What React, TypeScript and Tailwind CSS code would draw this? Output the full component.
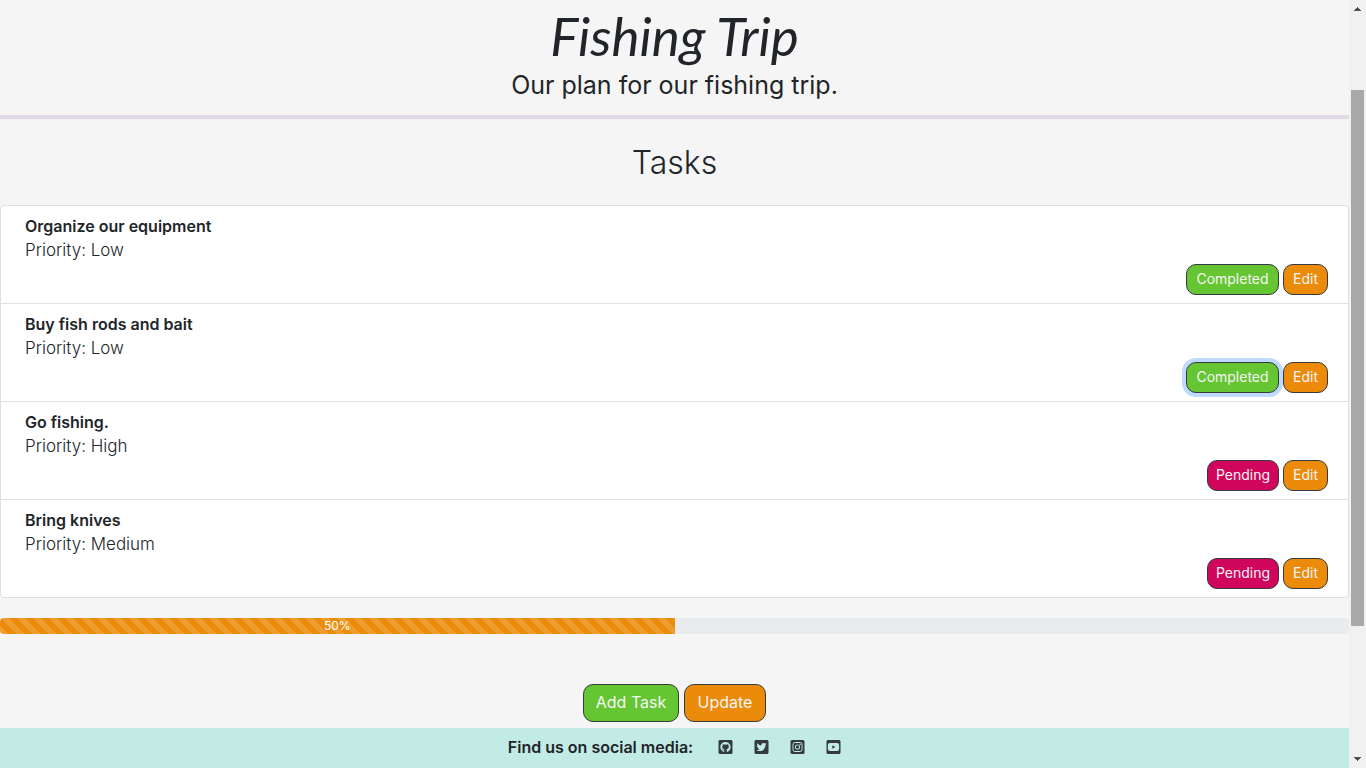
import {
  FaGithubSquare,
  FaInstagramSquare,
  FaTwitterSquare,
  FaYoutubeSquare,
} from "react-icons/fa";

type Task = {
  title: string;
  priority: "Low" | "Medium" | "High";
  done: boolean;
  highlighted?: boolean;
};

const tasks: Task[] = [
  { title: "Organize our equipment", priority: "Low", done: true },
  { title: "Buy fish rods and bait", priority: "Low", done: true, highlighted: true },
  { title: "Go fishing.", priority: "High", done: false },
  { title: "Bring knives", priority: "Medium", done: false },
];

const socials = [
  { label: "GitHub", Icon: FaGithubSquare },
  { label: "Twitter", Icon: FaTwitterSquare },
  { label: "Instagram", Icon: FaInstagramSquare },
  { label: "YouTube", Icon: FaYoutubeSquare },
];

const smallButton =
  "h-[31px] rounded-[10px] border border-[#343a40] px-2 pb-0.5 text-sm whitespace-nowrap text-[#f5f5f5]";
const largeButton =
  "h-[38px] rounded-[10px] border border-[#343a40] px-2 pb-0.5 text-base whitespace-nowrap text-[#f5f5f5]";

function TaskRow({ task }: { task: Task }) {
  return (
    <li className="border-b border-[#dfdfdf] py-2 pr-5 pl-6 last:border-b-0">
      <h3 className="text-base leading-6 font-semibold">{task.title}</h3>
      <p className="text-[17px] leading-6 font-light">Priority: {task.priority}</p>
      <div className="mt-0.5 flex justify-end gap-1">
        <button
          type="button"
          className={`${smallButton} ${task.done ? "w-[93px] bg-[#66c533]" : "w-[72px] bg-[#d0065d]"} ${
            task.highlighted ? "ring-4 ring-[#bfd9ff]" : ""
          }`}
        >
          {task.done ? "Completed" : "Pending"}
        </button>
        <button type="button" className={`${smallButton} relative w-[45px] bg-[#ec8b0a]`}>
          Edit
        </button>
      </div>
    </li>
  );
}

function ScrollTrack() {
  return (
    <aside aria-hidden="true" className="sticky top-0 flex h-screen w-[17px] shrink-0 flex-col items-center bg-[#f1f1f1]">
      <svg className="h-[17px] w-[17px] shrink-0" viewBox="0 0 17 17" fill="#505050" shapeRendering="crispEdges">
        <path d="M8 7h1v1h1v1h1v1h1v1H5v-1h1V9h1V8h1z" />
      </svg>
      <div className="flex w-full grow flex-col items-center pt-[73px] pb-[125px]">
        <div className="w-[13px] grow bg-[#a8a8a8]" />
      </div>
      <svg className="h-[17px] w-[17px] shrink-0" viewBox="0 0 17 17" fill="#505050" shapeRendering="crispEdges">
        <path d="M5 6h7v1h-1v1h-1v1H9v1H8V9H7V8H6V7H5z" />
      </svg>
    </aside>
  );
}

export default function App() {
  const percent = (tasks.filter((task) => task.done).length / tasks.length) * 100;

  return (
    <div className="flex min-h-screen bg-[#f5f5f5] font-[Inter,sans-serif] text-[#212529]">
      <div className="flex min-w-0 grow flex-col">
        <header className="border-b-4 border-[#dfd9e6] pt-1 pb-3 text-center">
          <h1 className="font-[Lato,cursive] text-[53px] leading-[64px] font-normal italic">
            Fishing Trip
          </h1>
          <p className="text-[25px] leading-[35px]">Our plan for our fishing trip.</p>
        </header>

        <main className="grow">
          <h2 className="pt-6 pb-[22px] text-center text-[32px] leading-10 font-light">Tasks</h2>
          <ul className="rounded border border-[#dfdfdf] bg-white">
            {tasks.map((task) => (
              <TaskRow key={task.title} task={task} />
            ))}
          </ul>
          <div
            role="progressbar"
            aria-label="Completed tasks"
            aria-valuenow={percent}
            aria-valuemin={0}
            aria-valuemax={100}
            className="mt-5 h-4 overflow-hidden rounded bg-[#e9ecef]"
          >
            <div
              className="h-full bg-[#ec8b0a] bg-[linear-gradient(45deg,rgba(255,255,255,.15)_25%,transparent_25%,transparent_50%,rgba(255,255,255,.15)_50%,rgba(255,255,255,.15)_75%,transparent_75%,transparent)] bg-size-[16px_16px] text-center text-xs leading-4 text-white"
              style={{ width: `${percent}%` }}
            >
              {percent}%
            </div>
          </div>
          <div className="mt-[50px] mb-1.5 flex justify-center gap-[5px]">
            <button type="button" className={`${largeButton} w-24 bg-[#66c533]`}>
              Add Task
            </button>
            <button type="button" className={`${largeButton} w-[82px] bg-[#ec8b0a]`}>
              Update
            </button>
          </div>
        </main>

        <footer className="flex h-10 items-center justify-center gap-[21px] bg-[#c3ebe5] pb-0.5">
          <p className="mr-1 text-base leading-6 font-semibold">Find us on social media:</p>
          {socials.map(({ label, Icon }) => (
            <a key={label} href="#" aria-label={label} className="text-[#343a40]">
              <Icon className="h-4 w-[15px]" />
            </a>
          ))}
        </footer>
      </div>
      <ScrollTrack />
    </div>
  );
}
